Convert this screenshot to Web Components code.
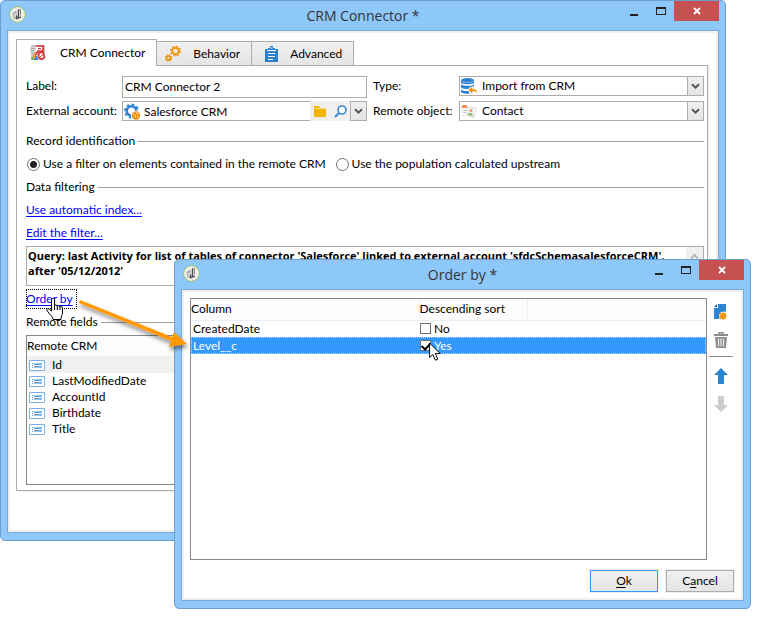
<!DOCTYPE html>
<html lang="en">
<head>
<meta charset="utf-8">
<title>CRM Connector</title>
<style>
  :root {
    --frame: #8ec8fa;
    --frame-edge: #6f9fcf;
    --line: #acacac;
    --dark-line: #828790;
    --soft: #f0f0f0;
  }
  * { box-sizing: border-box; }
  body {
    margin: 0;
    background: #fff;
    color: #000;
    font: 12px/16px Lato, "Open Sans", sans-serif;
  }
</style>
</head>
<body>
<crm-desktop></crm-desktop>

<script>
const ICONS = {
  logo: [17, 17, `<circle cx="8.500" cy="8.500" r="7.800" fill="#fff" stroke="#8dba50"/>
    <circle cx="8.500" cy="8.500" r="6.800" fill="#f0f0ee" stroke="#e3e6de" stroke-width=".6"/>
    <path d="M3.500 7 7.500 4.500v7.500L4.500 13z" fill="#a6a6a4"/><path d="M5 8l2-1v4l-2 .8z" fill="#dededc"/>
    <path d="M9.500 3.500v8h2.500M7.500 9.500v3h2" fill="none" stroke="#4a4a4a" stroke-width="1.400"/><path d="M9 3.500h2.500v6" fill="none" stroke="#888"/>`],
  connector: [16, 16, `<path fill="#c6c2bf" d="M1 0h14v15H1z"/><path fill="#e6d9cf" d="M0 2h5v5H0z"/>
    <path d="M1 3.500h4M1 5.500h3" stroke="#a5a09c"/>
    <path d="M6 1h7v5H8L5 10" fill="#fff" stroke="#e02b2b" stroke-width="1.600"/><path d="M8 3.500h3" stroke="#e02b2b"/>
    <path d="M9 8l4-1 1.500 5-3 2.500L8.500 12z" fill="#fff" stroke="#e02b2b" stroke-width="1.600"/><path d="M10 12l3.500-3" stroke="#e02b2b"/>
    <path fill="#f39b1d" d="M2 14l2.500-7L7 14z"/><path fill="#3a86cf" d="M4 15l2-5 2.500 5z"/><path fill="#67b04b" d="M1 15l1-4 2 4z"/>`],
  gears: [16, 16, `<g fill="none" stroke="#f0960f"><circle cx="10.500" cy="5" r="3.300" stroke-width="2"/>
    <circle cx="10.500" cy="5" r="4.800" stroke-width="1.500" stroke-dasharray="1.900 1.870"/>
    <circle cx="3.500" cy="12" r="2" stroke-width="1.800"/>
    <circle cx="3.500" cy="12" r="3.200" stroke-width="1.200" stroke-dasharray="1.250 1.260"/></g>`],
  clipboard: [13, 16, `<path fill="#2b7fd0" d="M0 3h3V2h2V0h3v2h2v1h3v13H0z"/><path fill="#fff" d="M5.500 1.500h2v1h-2zM2 4h9v1H2z"/>
    <path d="M3 7.500h7M3 10.500h7M3 13.500h5" stroke="#fff"/>`],
  account: [17, 17, `<circle cx="7.500" cy="8" r="4.800" fill="none" stroke="#2b7fd0" stroke-width="2.600"/>
    <circle cx="7.500" cy="8" r="6.700" fill="none" stroke="#2b7fd0" stroke-width="1.700" stroke-dasharray="2.600 2.660"/>
    <circle cx="12" cy="12.500" r="5" fill="#fff"/><circle cx="12" cy="12.500" r="4.200" fill="#ee9314"/>
    <path d="M9 11l2 1 1 3M12 9l1 2 2-1M13 14l2-1" fill="none" stroke="#fbd79c"/>`],
  folder: [13, 11, `<path fill="#f2b500" d="M0 0h5l1 2h6v9H0z"/><path fill="#fff" opacity=".55" d="M1 2h11v1H1z"/>`],
  search: [13, 13, `<circle cx="8" cy="5" r="4" fill="#fff" stroke="#3a86d0" stroke-width="1.600"/><path d="M5 8 1 12" stroke="#3a86d0" stroke-width="2"/>`],
  database: [17, 17, `<g fill="#2b7fd0"><ellipse cx="6.500" cy="2.200" rx="6.500" ry="2.200"/><path d="M0 2.500v2.500c1 1.500 12 1.500 13 0V2.500c-2 1.600-11 1.600-13 0z"/>
    <path d="M0 6.500c2 1.800 11 1.800 13 0v2L9 9l-2 2c-3 0-6 0-7-1.500zM0 11.500c1 1 4 1.500 7 1.500l2 2.500c-4 .5-8 .2-9-1.500z"/></g>
    <path d="M.5 3.300c2 1.500 10 1.500 12 0" fill="none" stroke="#9cc6ee" stroke-width=".8"/>
    <path fill="#f0960f" stroke="#fff" stroke-width=".5" d="M7 12l4.500-4v2.500c4 .2 5 3 5 5.500-1-2-2-2.500-5-2.500V16z"/>`],
  contact: [16, 15, `<path fill="#e2e2e0" d="M0 2h7v10H1z"/><path fill="#fff" d="M1 4h6v7H1z"/><path fill="#f0905f" d="M1 1h5v3H1z"/>
    <path fill="#f7f7f5" stroke="#cfcfcd" stroke-width=".8" d="M6 3l9 1-2 10-7-3z"/><circle cx="10" cy="6.500" r="1.600" fill="#f29555"/>
    <path fill="#8fbf6c" d="M7 11c0-3 5-3 5 1z"/><path d="M2 6.500h3M2 8.500h3" stroke="#bbb"/>`],
  chevron: [9, 7, `<path d="M1 1.200 4.500 4.700 8 1.200" fill="none" stroke="#555" stroke-width="2"/>`],
  up: [9, 7, `<path d="M1 5.500 4.500 2 8 5.500" fill="none" stroke="#b5b5b5" stroke-width="2"/>`],
  attribute: [16, 11, `<path fill="#fff" stroke="#7fb2e2" d="M.5.500h15v10H.5z"/><path d="M3 3.500h1M3 5.500h1M3 7.500h1" stroke="#5b9bd5"/>
    <path d="M5 3.500h8M5 7.500h8" stroke="#9cc4ea"/><path d="M5 4.500h8M5 6.500h8" stroke="#5b9fdb"/>`],
  add: [14, 16, `<path fill="#2b84d4" d="M4 0h8v7.500L7 8l-2 3 .5 4H0V4h4z"/><path fill="#1c5fa5" d="M0 3l3-3v3z"/>
    <circle cx="9" cy="12" r="3" fill="#f0960f"/><path d="M9 8v8M5 12h8M6.200 9.200l5.600 5.600M11.800 9.200l-5.600 5.600" stroke="#f0960f" stroke-width="1.200"/>`],
  trash: [14, 16, `<path d="M5 2V.7h4V2" fill="none" stroke="#8c8c8c" stroke-width="1.400"/><path fill="#8c8c8c" d="M0 2h14v2H0zM1 5h12l-1 11H2z"/>
    <path d="M4.500 6.500v8M7 6.500v8M9.500 6.500v8" stroke="#e8e8e8" stroke-width="1.200"/>`],
  arrowup: [14, 16, `<path fill="#2b84d4" d="M7 0l7 7H10v9H4V7H0z"/>`],
  arrowdown: [14, 16, `<path fill="#cdcdcd" d="M7 16l7-7H10V0H4v9H0z"/>`],
  minimize: [8, 3, `<path fill="#222" d="M0 1h8v2H0z"/>`],
  maximize: [10, 8, `<path fill="#222" d="M0 0h10v8H0zM1 2v5h8V2z" fill-rule="evenodd"/>`],
  close: [8, 8, `<path d="M1 1l6 6M7 1 1 7" stroke="#fff" stroke-width="1.800"/>`],
  hand: [18, 23, `<path d="M5.500 13V2c0-2 3-2 3 0v6c0-1.500 2.600-1.500 2.800.5.200-1.400 2.500-1.200 2.700.6.300-1.300 2.500-1 2.500.9v5c0 2-1.500 3-1.500 6.500H7c0-3-3.500-5-6-9-.5-1.500 1-2.500 2.300-1.200z" fill="#fff" stroke="#000"/>
    <path d="M8.500 8v4M11.300 8.500V12M14 9v3" stroke="#000"/>`],
  pointer: [12, 19, `<path d="M.6 1v14.500l3.300-3 2.400 5.700 2.500-1-2.400-5.600h4.800z" fill="#fff" stroke="#000"/>`],
};

// small drawings, one svg per name
class UiIcon extends HTMLElement {
  constructor() {
    super();
    const shadow = this.attachShadow({ mode: 'open' });
    const [w, h, body] = ICONS[this.getAttribute('name')];
    shadow.innerHTML = `
      <style>
        :host { display: inline-block; flex: none; line-height: 0; pointer-events: none; }
        svg { display: block; }
      </style>
      <svg width="${w}" height="${h}" viewBox="0 0 ${w} ${h}" aria-hidden="true">${body}</svg>
    `;
  }
}

class AppWindow extends HTMLElement {
  constructor() {
    super();
    const shadow = this.attachShadow({ mode: 'open' });
    const title = this.getAttribute('heading');
    shadow.innerHTML = `
      <style>
        * { box-sizing: border-box; }
        :host {
          display: block;
          box-sizing: border-box;
          background: var(--frame);
          border: 1px solid var(--frame-edge);
          border-radius: 5px;
          padding: 0 6px 7px;
        }
        header {
          display: grid;
          grid-template-columns: 1fr auto 1fr;
          align-items: start;
          height: 29px;
        }
        header > ui-icon { margin: 5px 2px; }
        h1 {
          margin: 0;
          color: #333;
          font: 400 14px/29px "Open Sans", "Noto Sans", sans-serif;
        }
        .controls { display: flex; justify-content: flex-end; }
        button {
          display: flex;
          justify-content: center;
          align-items: center;
          width: 27px;
          height: 20px;
          padding: 0;
          border: 0;
          background: none;
        }
        .minimize { align-items: flex-end; padding-bottom: 5px; }
        .close { width: 45px; background: #c75050; }
        main {
          border: 1px solid #7ba9d6;
          background: #fff;
          box-shadow: inset 0 0 0 2px var(--soft);
        }
      </style>
      <header>
        <ui-icon name="logo"></ui-icon>
        <h1>${title}</h1>
        <div class="controls">
          <button class="minimize" aria-label="Minimize"><ui-icon name="minimize"></ui-icon></button>
          <button aria-label="Maximize"><ui-icon name="maximize"></ui-icon></button>
          <button class="close" aria-label="Close"><ui-icon name="close"></ui-icon></button>
        </div>
      </header>
      <main><slot></slot></main>
    `;
  }
}

class TabButton extends HTMLElement {
  constructor() {
    super();
    const shadow = this.attachShadow({ mode: 'open' });
    shadow.innerHTML = `
      <style>
        :host { display: block; }
        button {
          box-sizing: border-box;
          display: flex;
          align-items: center;
          gap: 12px;
          height: 24px;
          padding: 0 11px 0 var(--tab-inset, 8px);
          border: 1px solid var(--line);
          border-bottom: 0;
          background: linear-gradient(#f0f0f0, #e5e5e5);
          color: inherit;
          font: inherit;
        }
        :host([selected]) button {
          height: 27px;
          gap: 14px;
          margin-bottom: -1px;
          background: #fff;
        }
      </style>
      <button role="tab"><ui-icon name="${this.getAttribute('icon')}"></ui-icon><slot></slot></button>
    `;
  }
}

class GroupTitle extends HTMLElement {
  constructor() {
    super();
    const shadow = this.attachShadow({ mode: 'open' });
    shadow.innerHTML = `
      <style>
        :host { display: flex; align-items: center; gap: 3px; height: 20px; }
        i { flex: 1; height: 1px; background: #a0a0a0; }
      </style>
      <slot></slot><i></i>
    `;
  }
}

// label + control, both cells of the surrounding grid
class FormField extends HTMLElement {
  constructor() {
    super();
    const shadow = this.attachShadow({ mode: 'open' });
    const type = this.getAttribute('type');
    const value = this.getAttribute('value');
    const icon = this.getAttribute('icon');
    const iconHTML = icon ? `<ui-icon name="${icon}"></ui-icon>` : '';
    let control = '';
    if (type == 'select') {
      control = `<select id="control"><option>${value}</option></select>
        <span class="drop"><ui-icon name="chevron"></ui-icon></span>`;
    } else {
      control = `<input id="control" type="text" value="${value}">`;
    }
    if (type == 'link') {
      control += `
        <button aria-label="Open"><ui-icon name="folder"></ui-icon></button>
        <button aria-label="Search"><ui-icon name="search"></ui-icon></button>
        <button class="drop" aria-label="Show list"><ui-icon name="chevron"></ui-icon></button>`;
    }
    shadow.innerHTML = `
      <style>
        * { box-sizing: border-box; }
        :host { display: contents; }
        label { padding-left: var(--label-inset, 0); line-height: 20px; white-space: nowrap; }
        .box {
          display: flex;
          align-items: center;
          min-width: 0;
          height: 20px;
          border: 1px solid var(--line);
          background: #fff;
        }
        .text { height: 22px; align-items: flex-start; padding: 0 1px; }
        .box > ui-icon { width: 17px; margin: 0 2px 0 1px; }
        input, select {
          flex: 1;
          min-width: 0;
          width: 100%;
          height: 18px;
          margin: 0;
          padding: 0 1px;
          border: 0;
          outline: 0;
          appearance: none;
          background: none;
          color: inherit;
          font: inherit;
        }
        select { padding: 0 2px; }
        button {
          display: flex;
          align-items: center;
          justify-content: center;
          width: 20px;
          height: 20px;
          padding: 0;
          border: 0;
          background: #f0f0f0;
        }
        .drop {
          display: flex;
          flex: none;
          align-items: center;
          justify-content: center;
          width: 16px;
          height: 18px;
          border: 0 solid var(--line);
          border-left-width: 1px;
          background: linear-gradient(#f0f0f0, #e5e5e5);
          pointer-events: none;
        }
      </style>
      <label for="control">${this.getAttribute('label')}</label>
      <div class="box ${type}">${iconHTML}${control}</div>
    `;
  }
}

class FieldList extends HTMLElement {
  constructor() {
    super();
    const shadow = this.attachShadow({ mode: 'open' });
    let rows = '';
    for (const name of this.getAttribute('items').split(',')) {
      rows += `<li><ui-icon name="attribute"></ui-icon>${name}</li>`;
    }
    shadow.innerHTML = `
      <style>
        :host {
          display: block;
          box-sizing: border-box;
          min-height: 150px;
          border: 1px solid var(--dark-line);
          background: #fff;
        }
        h2 {
          margin: 0;
          border-bottom: 1px solid #e5f0fb;
          background: #fcfcfc;
          font-size: inherit;
          font-weight: 400;
          line-height: 20px;
        }
        ul { margin: 0; padding: 0; list-style: none; }
        li { display: flex; gap: 7px; align-items: center; height: 16px; padding-left: 2px; }
        li:first-child { background: #f0f0f0; }
      </style>
      <h2>${this.getAttribute('heading')}</h2>
      <ul>${rows}</ul>
    `;
  }
}

class ConnectorForm extends HTMLElement {
  constructor() {
    super();
    const shadow = this.attachShadow({ mode: 'open' });
    shadow.innerHTML = `
      <style>
        * { box-sizing: border-box; }
        :host { display: block; padding: 8px 10px 41px 8px; }
        nav { display: flex; align-items: flex-end; }
        nav tab-button + tab-button { margin-left: -1px; }
        nav tab-button:first-child, nav tab-button:last-child { --tab-inset: 13px; }
        nav tab-button[selected] { position: relative; z-index: 1; }
        section {
          display: flex;
          flex-direction: column;
          gap: 3px;
          padding: 10px 3px 5px 9px;
          border: 1px solid var(--line);
          box-shadow: 2px 1px 0 var(--soft);
        }
        .fields {
          display: grid;
          grid-template-columns: 96px 1fr 92px 1fr;
          row-gap: 3px;
          margin-bottom: 7px;
        }
        .fields form-field:nth-child(even) { --label-inset: 6px; }
        .radios { display: flex; align-items: center; gap: 10px; height: 20px; padding-left: 1px; }
        .radios label { display: flex; align-items: center; gap: 3px; }
        input[type=radio] {
          appearance: none;
          width: 13px;
          height: 13px;
          margin: 0;
          border: 1px solid #707070;
          border-radius: 50%;
          background: #fff;
        }
        input[type=radio]:checked { background: radial-gradient(circle, #222 3px, #fff 4px); }
        a {
          align-self: flex-start;
          line-height: 20px;
          color: #00f;
          text-underline-offset: 2px;
        }
        a.focus { outline: 1px dotted #000; outline-offset: -1px; padding-right: 4px; }
        .query { display: flex; border: 1px solid var(--line); height: 40px; }
        .query textarea {
          flex: 1;
          min-width: 0;
          margin: 0;
          padding: 1px;
          border: 0;
          outline: 0;
          overflow: hidden;
          resize: none;
          background: #fff;
          color: inherit;
          font: 700 11px/15px "Open Sans", "Noto Sans", sans-serif;
        }
        .query button {
          width: 17px;
          padding: 6px 4px;
          border: 0;
          background: #f0f0f0;
          display: flex;
          align-items: flex-start;
        }
      </style>
      <nav role="tablist">
        <tab-button icon="connector" selected>CRM Connector</tab-button>
        <tab-button icon="gears">Behavior</tab-button>
        <tab-button icon="clipboard">Advanced</tab-button>
      </nav>
      <section>
        <div class="fields">
          <form-field type="text" label="Label:" value="CRM Connector 2"></form-field>
          <form-field type="select" label="Type:" icon="database" value="Import from CRM"></form-field>
          <form-field type="link" label="External account:" icon="account" value="Salesforce CRM"></form-field>
          <form-field type="select" label="Remote object:" icon="contact" value="Contact"></form-field>
        </div>
        <group-title>Record identification</group-title>
        <div class="radios">
          <label><input type="radio" name="population" checked>Use a filter on elements contained in the remote CRM</label>
          <label><input type="radio" name="population">Use the population calculated upstream</label>
        </div>
        <group-title>Data filtering</group-title>
        <a href="#">Use automatic index...</a>
        <a href="#">Edit the filter...</a>
        <div class="query">
          <textarea readonly aria-label="Query">Query: last Activity for list of tables of connector 'Salesforce' linked to external account 'sfdcSchemasalesforceCRM', after '05/12/2012'</textarea>
          <button aria-label="Scroll up"><ui-icon name="up"></ui-icon></button>
        </div>
        <a class="focus" href="#">Order by</a>
        <group-title>Remote fields</group-title>
        <field-list heading="Remote CRM" items="Id,LastModifiedDate,AccountId,Birthdate,Title"></field-list>
      </section>
    `;
  }
}

class OrderForm extends HTMLElement {
  constructor() {
    super();
    const shadow = this.attachShadow({ mode: 'open' });
    shadow.innerHTML = `
      <style>
        * { box-sizing: border-box; }
        :host { display: block; padding: 8px 9px 8px 8px; }
        .body { display: flex; gap: 2px; }
        .grid { flex: 1; min-height: 262px; border: 1px solid var(--dark-line); }
        table { width: 100%; border-collapse: collapse; table-layout: fixed; }
        th, td { padding: 0; text-align: left; font-weight: 400; }
        th { height: 21px; border: 0 solid #e5f0fb; border-width: 0 0 1px 1px; background: #fcfcfc; }
        th:first-child { width: 228px; border-left: 0; }
        th:nth-child(2) { width: 108px; }
        td { height: 17px; line-height: 16px; }
        td:first-child { padding-left: 2px; }
        tr.selected { background: #3399ff; color: #fff; outline: 1px dotted #b8dcff; outline-offset: -1px; }
        label { display: flex; align-items: center; gap: 3px; }
        input {
          appearance: none;
          display: flex;
          justify-content: center;
          width: 11px;
          height: 11px;
          margin: 0 0 0 1px;
          border: 1px solid #707070;
          background: #fff;
        }
        input:checked::after {
          content: "";
          width: 4px;
          height: 7px;
          border: 0 solid #000;
          border-width: 0 2px 2px 0;
          transform: rotate(42deg);
        }
        .tools { display: flex; flex-direction: column; align-items: flex-start; width: 25px; padding-top: 4px; }
        .tools button { display: flex; justify-content: center; align-items: center; width: 24px; height: 20px; padding: 0; border: 0; background: none; }
        .tools button + button { margin-top: 8px; }
        hr { width: 24px; margin: 6px 0 9px; border: 0; border-top: 1px solid #8c8c8c; }
        footer { display: flex; justify-content: flex-end; gap: 8px; margin-top: 10px; }
        footer button {
          width: 68px;
          height: 22px;
          padding: 0;
          border: 1px solid var(--line);
          background: linear-gradient(#f0f0f0, #e5e5e5);
          box-shadow: 0 0 0 1px var(--soft);
          color: inherit;
          font: inherit;
        }
        footer .default { border-color: #3399ff; }
        u { text-underline-offset: 2px; }
      </style>
      <div class="body">
        <div class="grid">
          <table>
            <thead><tr><th>Column</th><th>Descending sort</th><th></th></tr></thead>
            <tbody>
              <tr><td>CreatedDate</td><td colspan="2"><label><input type="checkbox">No</label></td></tr>
              <tr class="selected"><td>Level__c</td><td colspan="2"><label><input type="checkbox" checked>Yes</label></td></tr>
            </tbody>
          </table>
        </div>
        <div class="tools">
          <button aria-label="Add"><ui-icon name="add"></ui-icon></button>
          <button aria-label="Delete"><ui-icon name="trash"></ui-icon></button>
          <hr>
          <button aria-label="Move up"><ui-icon name="arrowup"></ui-icon></button>
          <button aria-label="Move down"><ui-icon name="arrowdown"></ui-icon></button>
        </div>
      </div>
      <footer>
        <button class="default"><u>O</u>k</button>
        <button>C<u>a</u>ncel</button>
      </footer>
    `;
  }
}

class CrmDesktop extends HTMLElement {
  constructor() {
    super();
    const shadow = this.attachShadow({ mode: 'open' });
    shadow.innerHTML = `
      <style>
        :host { display: block; position: relative; min-height: 100vh; }
        .main { margin-right: 51px; }
        .dialog { position: absolute; top: 259px; left: 174px; right: 26px; }
        .hand { position: absolute; left: 46px; top: 298px; }
        .pointer { position: absolute; left: 429px; top: 342px; }
        .callout { position: absolute; left: 75px; top: 296px; pointer-events: none; }
      </style>
      <app-window class="main" heading="CRM Connector *"><connector-form></connector-form></app-window>
      <app-window class="dialog" heading="Order by *"><order-form></order-form></app-window>
      <svg class="callout" width="120" height="66" viewBox="0 0 120 66" aria-hidden="true">
        <defs><filter id="shade" x="-10%" y="-20%" width="120%" height="150%"><feDropShadow dx="1" dy="3" stdDeviation="2" flood-opacity=".5"/></filter></defs>
        <path filter="url(#shade)" fill="#ff9900" d="M5 4l92 37 2-5 13 12-18 3 2-6L4 7z"/>
      </svg>
      <ui-icon class="hand" name="hand"></ui-icon>
      <ui-icon class="pointer" name="pointer"></ui-icon>
    `;
  }
}

customElements.define('ui-icon', UiIcon);
customElements.define('tab-button', TabButton);
customElements.define('group-title', GroupTitle);
customElements.define('form-field', FormField);
customElements.define('field-list', FieldList);
customElements.define('app-window', AppWindow);
customElements.define('connector-form', ConnectorForm);
customElements.define('order-form', OrderForm);
customElements.define('crm-desktop', CrmDesktop);
</script>
</body>
</html>
